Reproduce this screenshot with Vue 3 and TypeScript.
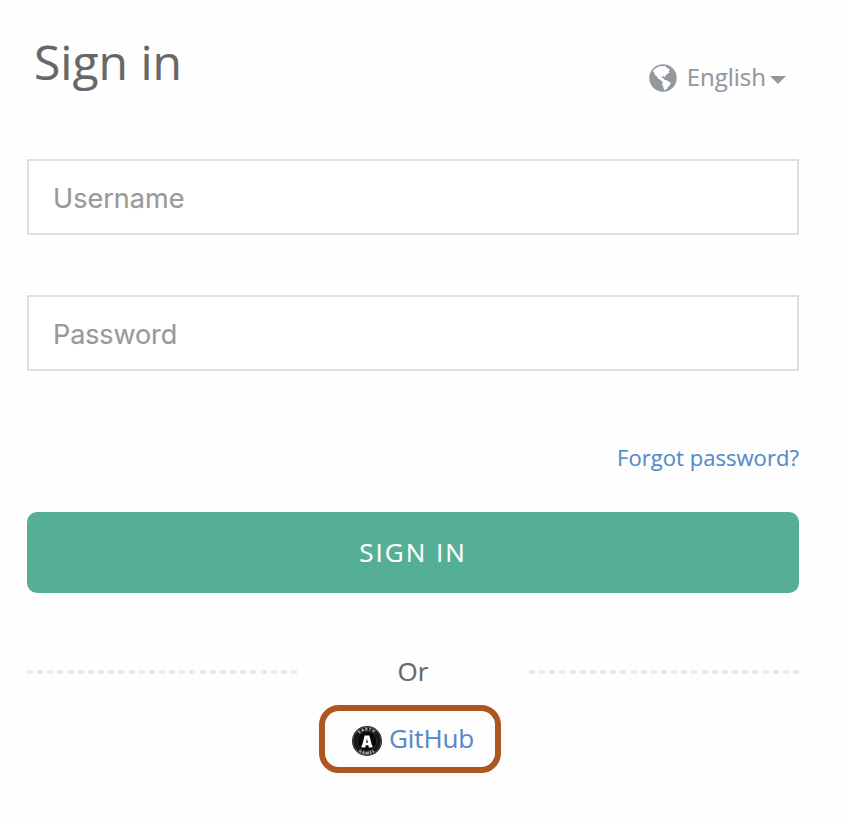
<script setup lang="ts">
import { ref } from 'vue'

const username = ref<string>('')
const password = ref<string>('')
</script>

<template>
  <main class="login">
    <header class="head">
      <h1>Sign in</h1>
      <button class="language" type="button">
        <svg class="globe" viewBox="0 0 28 28" aria-hidden="true">
          <circle cx="14" cy="14" r="13.7" fill="#9297a0" />
          <path fill="#fff" d="M3.7 7.6 6.1 4.6 9.3 2.7 12.4 1.7 13 2.6 15.2 1.8 17.6 3 18.5 4.8 19.7 4.2 20.8 6.6 19.6 7.6 20.6 8.8 18.3 9.8 16.8 11.3 16 13.2 14.7 12.1 12.9 12.7 12.7 14.1 14.2 14.3 14.8 13.6 15 15.4 16.2 16.1 18.9 16.8 20.4 18.3 22 18.8 20.9 21 19.4 22.4 17.6 25.2 15.3 26.2 14.1 22.6 13 20.2 14 18.2 12.5 17.3 11.3 15.7 9.2 14.8 7.5 12.1 5.9 11 5.5 9Z" />
        </svg>
        <span>English</span>
        <svg class="caret" viewBox="0 0 16 8" aria-hidden="true"><path d="M0 0h16L8 8z" fill="#9297a0" /></svg>
      </button>
    </header>

    <form @submit.prevent>
      <input v-model="username" type="text" placeholder="Username" aria-label="Username" />
      <input v-model="password" class="password" type="password" placeholder="Password" aria-label="Password" />
      <a class="forgot" href="#">Forgot password?</a>
      <button class="submit" type="submit">SIGN IN</button>
    </form>

    <div class="divider">
      <i class="dashes"></i>
      <span>Or</span>
      <i class="dashes"></i>
    </div>

    <a class="provider" href="#">
      <svg class="logo" viewBox="0 0 30 30" aria-hidden="true">
        <defs>
          <path id="logo-top" d="M4.5 15a10.5 10.5 0 0 1 21 0" />
          <path id="logo-bottom" d="M1.7 15a13.3 13.3 0 0 0 26.6 0" />
        </defs>
        <circle cx="15" cy="15" r="15" fill="#171717" />
        <circle cx="15" cy="15" r="14.1" fill="none" stroke="#777" stroke-width=".6" />
        <circle cx="15" cy="15" r="9.8" fill="#080808" stroke="#444" stroke-width=".5" />
        <text class="ring"><textPath href="#logo-top" startOffset="50%">EARTH</textPath></text>
        <text class="ring"><textPath href="#logo-bottom" startOffset="50%">GAMES</textPath></text>
        <path fill="#fff" fill-rule="evenodd" d="M12.6 9.4h4.8l2.4 9.6h.6v2.6h-3.6l-.5-2.4h-2.6l-.5 2.4H9.6V19h.6zM15 12.6l-.9 4.2h1.8z" />
      </svg>
      <span>GitHub</span>
    </a>
  </main>
</template>

<style>
body { background: #fefefe; }
</style>

<style scoped>
.login {
  box-sizing: border-box;
  width: 826px;
  height: 820px;
  padding: 29px 27px 0;
  display: flex;
  flex-direction: column;
  font-family: "Open Sans", sans-serif;
  color: #666769;
  -webkit-text-stroke: .15px currentColor;
}
.head {
  display: flex;
  justify-content: space-between;
  height: 130px;
  padding: 0 13px 0 7px;
}
h1 {
  margin: 0;
  font-size: 48px;
  font-weight: 400;
  line-height: 66px;
}
.language {
  display: flex;
  align-items: center;
  height: 34px;
  margin-top: 32px;
  padding: 0;
  border: 0;
  background: none;
  font: 400 24px/34px "Open Sans", sans-serif;
  color: #9297a0;
}
.language span { padding-bottom: 2px; }
.globe { width: 28px; height: 28px; margin-right: 10px; }
.caret { width: 16px; height: 8px; margin: 4px 0 0 4px; }
form { display: flex; flex-direction: column; }
input {
  box-sizing: border-box;
  width: 772px;
  height: 76px;
  margin: 0 0 60px;
  padding: 2px 24px 0;
  border: 2px solid #dfdfdf;
  border-radius: 0;
  outline: 0;
  background: #fff;
  font: 400 27px/36px Inter, sans-serif;
  letter-spacing: .05px;
  color: #666769;
}
input::placeholder { color: #999; opacity: 1; }
.password { letter-spacing: -.1px; }
.forgot {
  align-self: flex-end;
  margin-top: 10px;
  font-size: 22px;
  line-height: 32px;
  letter-spacing: .05px;
  color: #568bc9;
  text-decoration: none;
}
.submit {
  height: 81px;
  margin-top: 39px;
  padding: 0 0 2px;
  border: 0;
  border-radius: 10px;
  background: #54af94;
  color: #fff;
  font: 400 26px/36px "Open Sans", sans-serif;
  letter-spacing: 2px;
}
.divider {
  display: flex;
  align-items: center;
  justify-content: space-between;
  height: 36px;
  margin-top: 61px;
  font-size: 26px;
}
.divider span { padding-bottom: 2px; }
.dashes {
  width: 270px;
  height: 4px;
  background: repeating-linear-gradient(90deg, #e9eaeb 0 6px, transparent 6px 10.154px);
}
.provider {
  box-sizing: border-box;
  align-self: center;
  display: flex;
  align-items: center;
  width: 182px;
  height: 68px;
  margin: 15px 6px 0 0;
  padding-left: 27px;
  border: 6px solid #ad5620;
  border-radius: 20px;
  color: #568bc9;
  font-size: 26px;
  line-height: 36px;
  text-decoration: none;
}
.provider span { padding-bottom: 2px; letter-spacing: -.1px; }
.logo { width: 30px; height: 30px; margin: 4px 7px 0 0; }
.ring {
  font: 700 4px "Open Sans", sans-serif;
  letter-spacing: .8px;
  text-anchor: middle;
  fill: #ddd;
  -webkit-text-stroke: 0;
}
</style>
